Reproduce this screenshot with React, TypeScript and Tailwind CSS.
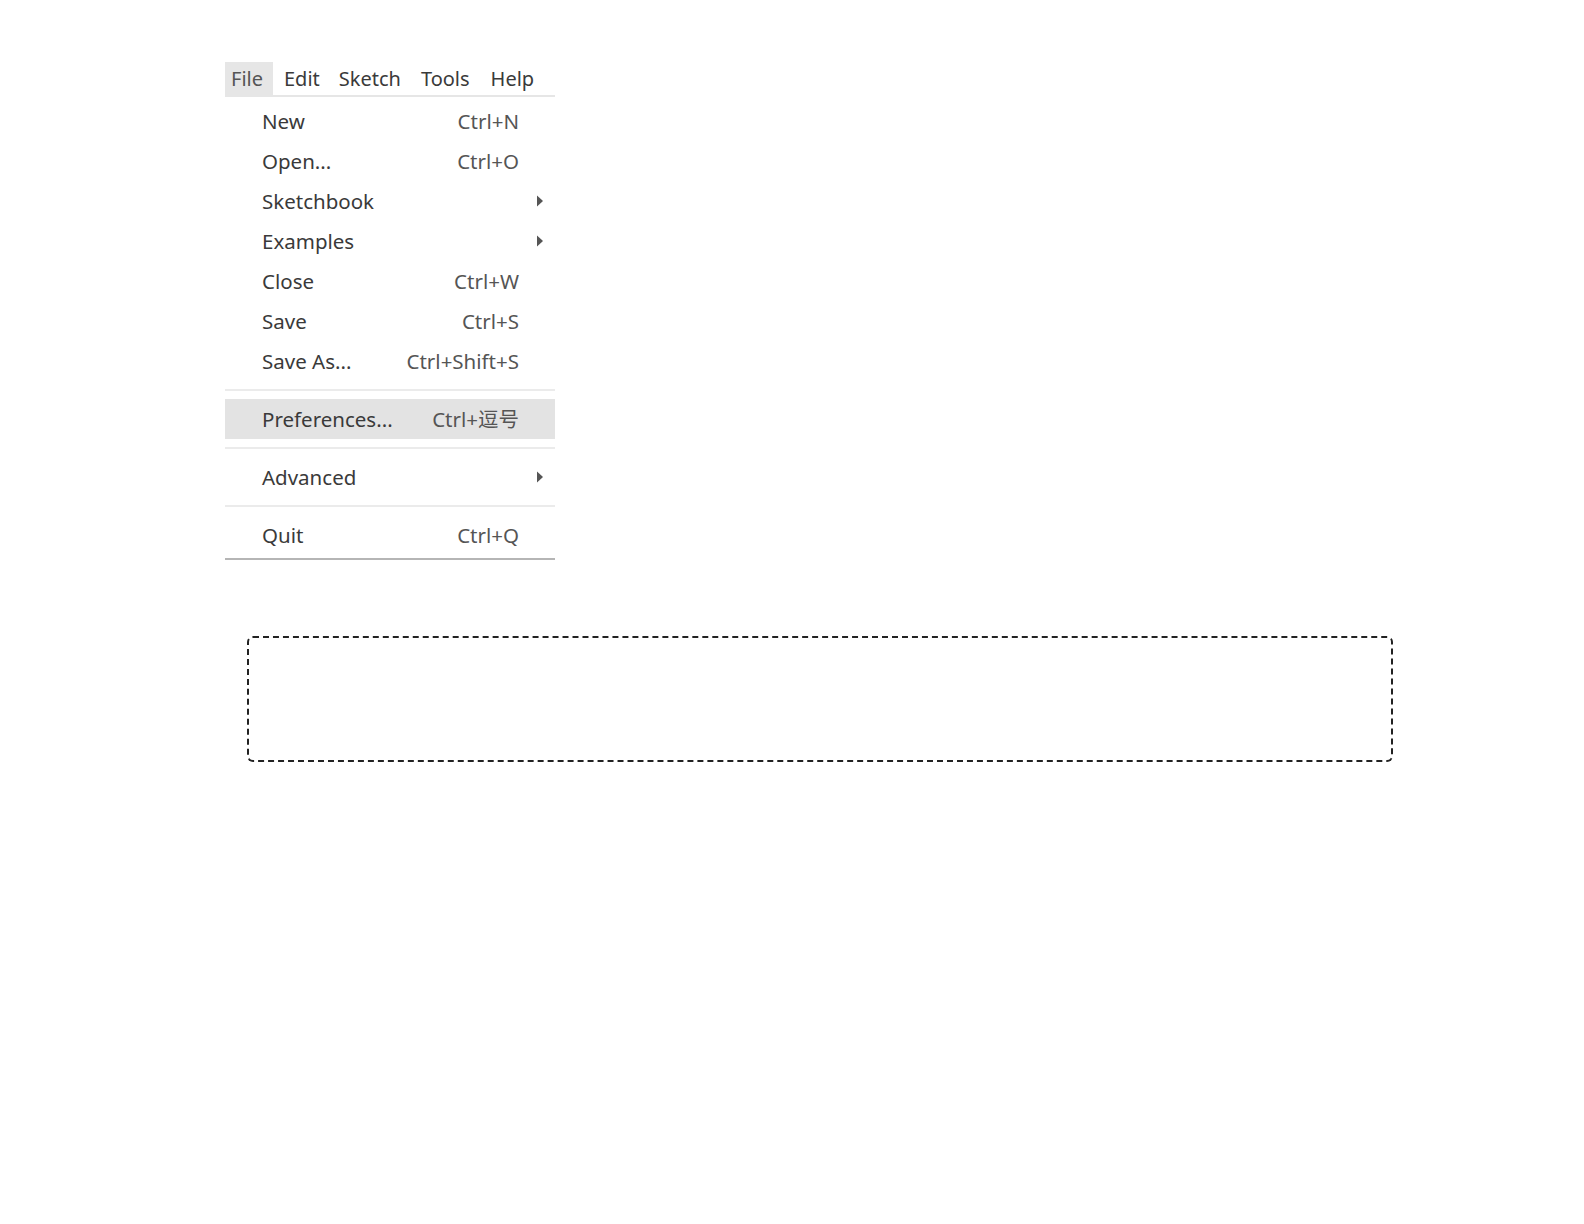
import { ReactNode } from 'react'

const Arrow = () => (
  <svg width="8" height="12" viewBox="0 0 8 12" className="fill-[#555]">
    <path d="M1 0.5 L7 6 L1 11.5 Z" />
  </svg>
)

const Item = ({ label, shortcut, sub, active }: { label: string; shortcut?: ReactNode; sub?: boolean; active?: boolean }) => (
  <div className={`flex h-[40px] items-center pl-[37px] pr-[11px] ${active ? 'bg-[#e3e3e3]' : ''}`}>
    <span className="flex-1">{label}</span>
    {shortcut && <span className="mr-[25px] text-[#555]">{shortcut}</span>}
    {sub && <Arrow />}
  </div>
)

const Sep = () => (
  <div className="flex h-[18px] items-center">
    <div className="h-[2px] w-full bg-[#ebebeb]" />
  </div>
)

const App = () => {
  return (
    <div
      className="min-h-[1224px] bg-white pt-[62px] text-[20.5px] text-[#3a3a3a]"
      style={{ fontFamily: '"Noto Sans", "Noto Sans CJK SC", sans-serif' }}
    >
      <div className="ml-[225px] w-[330px]">
        <div className="flex h-[35px] items-center border-b-2 border-[#e6e6e6] text-[20px]">
          <span className="flex h-full items-center bg-[#e6e6e6] pl-[6px] pr-[10px] text-[#555]">File</span>
          <span className="ml-[11px]">Edit</span>
          <span className="ml-[19px]">Sketch</span>
          <span className="ml-[20px]">Tools</span>
          <span className="ml-[21px]">Help</span>
        </div>
        <div className="border-b-2 border-[#b5b5b5] pt-[4px] pb-[3px]">
          <Item label="New" shortcut="Ctrl+N" />
          <Item label="Open..." shortcut="Ctrl+O" />
          <Item label="Sketchbook" sub />
          <Item label="Examples" sub />
          <Item label="Close" shortcut="Ctrl+W" />
          <Item label="Save" shortcut="Ctrl+S" />
          <Item label="Save As..." shortcut="Ctrl+Shift+S" />
          <Sep />
          <Item label="Preferences..." shortcut="Ctrl+逗号" active />
          <Sep />
          <Item label="Advanced" sub />
          <Sep />
          <Item label="Quit" shortcut="Ctrl+Q" />
        </div>
      </div>
      <div className="ml-[247px] mt-[76px] h-[126px] w-[1146px] rounded-[6px] border-2 border-dashed border-[#222]" />
    </div>
  )
}

export default App
